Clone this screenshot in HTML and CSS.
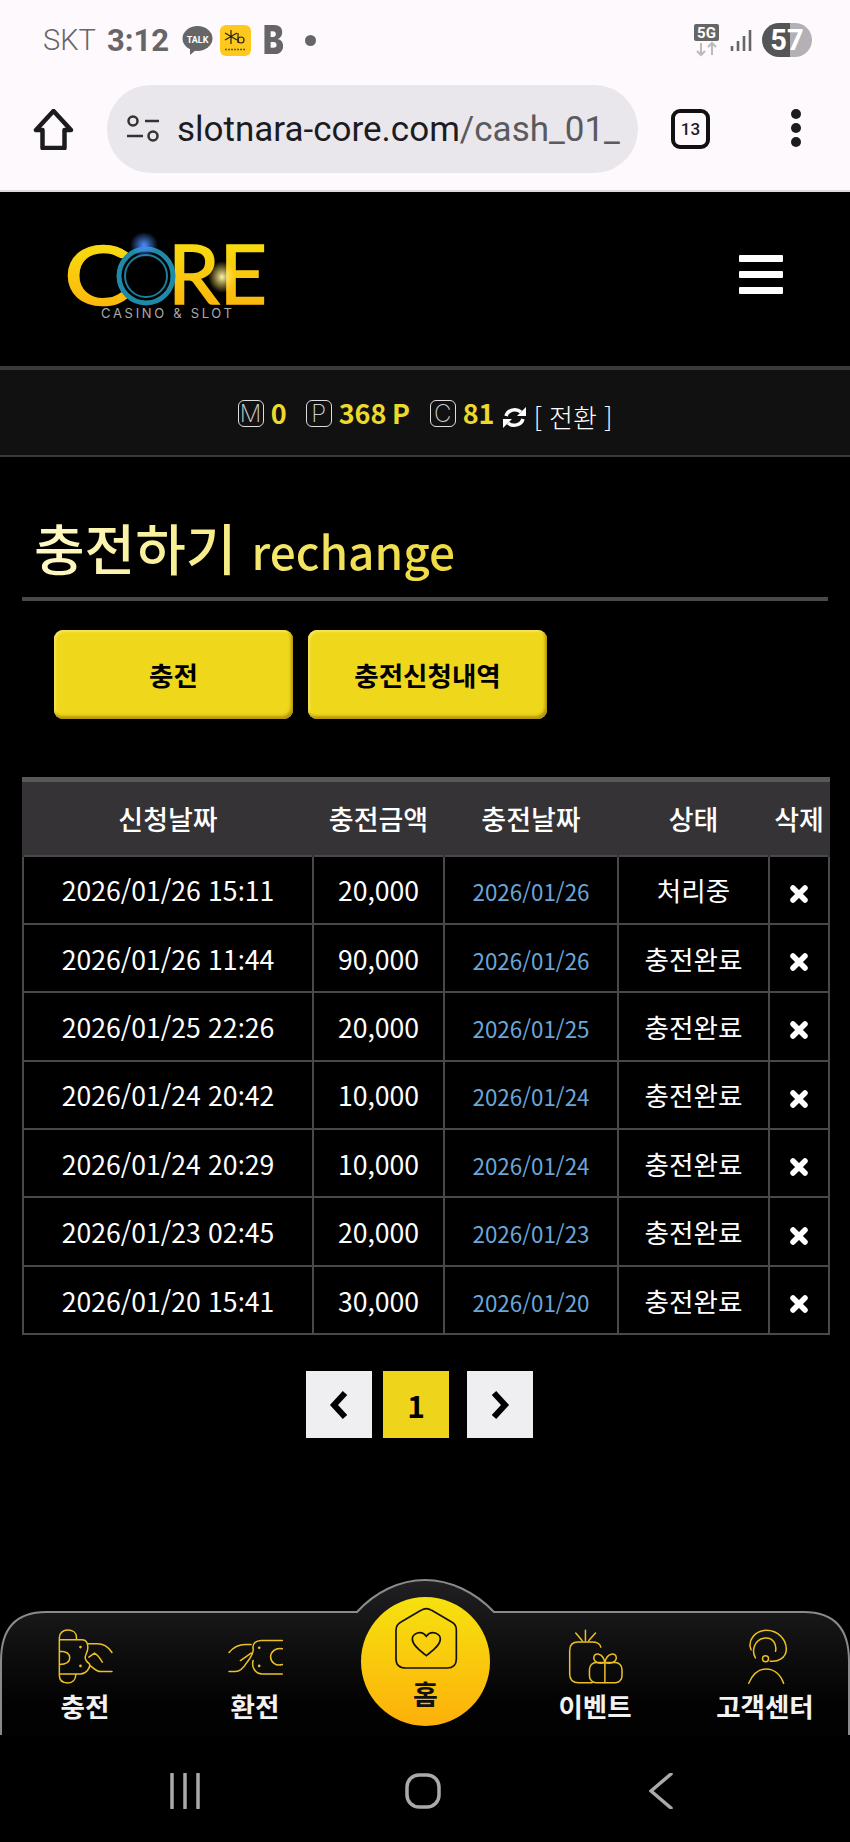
FILE: index.html
```html
<!DOCTYPE html>
<html lang="ko">
<head>
  <meta charset="UTF-8" />
  <title>충전하기 rechange</title>
  <link rel="stylesheet" href="styles.css">
</head>
<body>

  <div class="status">
    <span class="carrier">SKT</span>
    <span class="clock">3:12</span>
    <svg class="ico-talk" width="31" height="29" viewBox="0 0 31 29">
      <ellipse cx="15.5" cy="12.5" rx="15" ry="12.5" fill="#666"/>
      <polygon points="8,21 8,29 15,23" fill="#666"/>
      <text x="15.5" y="16.5" text-anchor="middle" class="talk-txt">TALK</text>
    </svg>
    <svg class="ico-kb" width="31" height="31" viewBox="0 0 31 31">
      <rect width="31" height="31" rx="6" fill="#fdc91c"/>
      <path d="M11 5v14M5 8l12 7M5 15l12-7" stroke="#222" stroke-width="1.2" fill="none"/>
      <path d="M18 8v10" stroke="#222" stroke-width="1.2"/>
      <circle cx="21" cy="15" r="3" stroke="#222" stroke-width="1.2" fill="none"/>
      <path d="M5 24.5h21" stroke="#6b5a10" stroke-width="1.6" stroke-dasharray="2 1"/>
    </svg>
    <span class="b-mark">B</span>
    <span class="dot"></span>
    <div class="status-right">
      <svg width="25" height="33" viewBox="0 0 25 33">
        <rect width="25" height="17" rx="2" fill="#666"/>
        <text x="12.5" y="14" text-anchor="middle" class="g5-txt">5G</text>
        <path d="M7 19v12M3 27l4 4 4-4M18 31V19M14 23l4-4 4 4" stroke="#bbb" stroke-width="2" fill="none"/>
      </svg>
      <svg class="ico-signal" width="22" height="23" viewBox="0 0 22 23">
        <path d="M2 17v5M8 12v10M14 7v15M20 1v21" stroke="#666" stroke-width="2.6"/>
      </svg>
      <span class="battery">57</span>
    </div>
  </div>

  <div class="chrome">
    <svg class="ico-home" width="41" height="41" viewBox="0 0 41 41">
      <path d="M20.5 2 3 21h6.500v18h22V21H38z" fill="none" stroke="#1c1b1f" stroke-width="4.500" stroke-linejoin="round"/>
    </svg>
    <div class="url">
      <svg class="tune" width="36" height="30" viewBox="0 0 36 30">
        <circle cx="8" cy="7" r="4.500" fill="none" stroke="#333" stroke-width="2.500"/>
        <path d="M20 7h14M2 22h16" stroke="#333" stroke-width="2.500"/>
        <circle cx="28" cy="22" r="4.500" fill="none" stroke="#333" stroke-width="2.500"/>
      </svg>
      <span class="url-txt"><b>slotnara-core.com</b>/cash_01_</span>
    </div>
    <span class="tabs">13</span>
    <span class="dots"><i></i><i></i><i></i></span>
  </div>

  <div class="site-top">
    <svg class="logo" width="210" height="100" viewBox="60 225 210 100">
      <defs>
        <linearGradient id="gold" x1="0" y1="0" x2="0" y2="1">
          <stop offset="0" stop-color="#f6e60f"/>
          <stop offset="1" stop-color="#fdae0c"/>
        </linearGradient>
        <radialGradient id="flare">
          <stop offset="0" stop-color="#4c8cff"/>
          <stop offset="1" stop-color="#4c8cff" stop-opacity="0"/>
        </radialGradient>
        <radialGradient id="flare2">
          <stop offset="0" stop-color="#fff6b0"/>
          <stop offset="1" stop-color="#ffe14a" stop-opacity="0"/>
        </radialGradient>
      </defs>
      <text x="64" y="305" class="logo-txt" fill="url(#gold)" stroke="url(#gold)" textLength="66" lengthAdjust="spacingAndGlyphs">C</text>
      <text x="168" y="304" class="logo-txt" fill="url(#gold)" stroke="url(#gold)" textLength="99" lengthAdjust="spacingAndGlyphs">RE</text>
      <circle cx="146" cy="276" r="27" fill="#000" stroke="#1e8aa8" stroke-width="5"/>
      <circle cx="146" cy="276" r="21" fill="#000" stroke="#1a7f9c" stroke-width="2"/>
      <ellipse cx="144" cy="245" rx="14" ry="13" fill="url(#flare)"/>
      <ellipse cx="222" cy="277" rx="14" ry="16" fill="url(#flare2)"/>
      <text x="101" y="318" class="logo-sub" textLength="131" lengthAdjust="spacing">CASINO &amp; SLOT</text>
    </svg>
    <div class="hamburger"><i></i><i></i><i></i></div>
  </div>

  <div class="money">
    <span class="mark">M</span><span class="amt amt-m">0</span>
    <span class="mark">P</span><span class="amt amt-p">368 P</span>
    <span class="mark">C</span><span class="amt amt-c">81</span>
    <svg class="sync" width="25" height="23" viewBox="0 0 25 23">
      <path d="M4 10a9 8 0 0 1 15-4" fill="none" stroke="#fff" stroke-width="3.500"/>
      <path d="M21 13a9 8 0 0 1-15 4" fill="none" stroke="#fff" stroke-width="3.500"/>
      <polygon points="24,1 24,10 15,10" fill="#fff"/>
      <polygon points="1,22 1,13 10,13" fill="#fff"/>
    </svg>
    <span class="swap">[ 전환 ]</span>
  </div>

  <h2 class="page-title"><span>충전하기</span><span class="en">rechange</span></h2>

  <div class="tab-btns">
    <a class="btn">충전</a>
    <a class="btn">충전신청내역</a>
  </div>

  <table class="list">
    <colgroup>
      <col class="c1"><col class="c2"><col class="c3"><col class="c4"><col class="c5">
    </colgroup>
    <thead>
      <tr><th>신청날짜</th><th>충전금액</th><th>충전날짜</th><th>상태</th><th>삭제</th></tr>
    </thead>
    <tbody>
      <tr><td>2026/01/26 15<span class="col">:</span>11</td><td>20,000</td><td class="day">2026/01/26</td><td>처리중</td><td><svg class="del" viewBox="0 0 18 18"><path d="M3 3l12 12M15 3 3 15"/></svg></td></tr>
      <tr><td>2026/01/26 11<span class="col">:</span>44</td><td>90,000</td><td class="day">2026/01/26</td><td>충전완료</td><td><svg class="del" viewBox="0 0 18 18"><path d="M3 3l12 12M15 3 3 15"/></svg></td></tr>
      <tr><td>2026/01/25 22<span class="col">:</span>26</td><td>20,000</td><td class="day">2026/01/25</td><td>충전완료</td><td><svg class="del" viewBox="0 0 18 18"><path d="M3 3l12 12M15 3 3 15"/></svg></td></tr>
      <tr><td>2026/01/24 20<span class="col">:</span>42</td><td>10,000</td><td class="day">2026/01/24</td><td>충전완료</td><td><svg class="del" viewBox="0 0 18 18"><path d="M3 3l12 12M15 3 3 15"/></svg></td></tr>
      <tr><td>2026/01/24 20<span class="col">:</span>29</td><td>10,000</td><td class="day">2026/01/24</td><td>충전완료</td><td><svg class="del" viewBox="0 0 18 18"><path d="M3 3l12 12M15 3 3 15"/></svg></td></tr>
      <tr><td>2026/01/23 02<span class="col">:</span>45</td><td>20,000</td><td class="day">2026/01/23</td><td>충전완료</td><td><svg class="del" viewBox="0 0 18 18"><path d="M3 3l12 12M15 3 3 15"/></svg></td></tr>
      <tr><td>2026/01/20 15<span class="col">:</span>41</td><td>30,000</td><td class="day">2026/01/20</td><td>충전완료</td><td><svg class="del" viewBox="0 0 18 18"><path d="M3 3l12 12M15 3 3 15"/></svg></td></tr>
    </tbody>
  </table>

  <div class="pager">
    <a class="pg"><svg width="20" height="30" viewBox="0 0 20 30"><path d="M16 3 5 15l11 12" fill="none" stroke="#000" stroke-width="6"/></svg></a>
    <a class="pg on">1</a>
    <a class="pg nxt"><svg width="20" height="30" viewBox="0 0 20 30"><path d="M4 3l11 12L4 27" fill="none" stroke="#000" stroke-width="6"/></svg></a>
  </div>

  <div class="bottom-nav">
    <svg class="nav-bg" width="850" height="156" viewBox="0 0 850 156">
      <defs>
        <linearGradient id="panel" x1="0" y1="0" x2="0" y2="1">
          <stop offset="0" stop-color="#201f21"/>
          <stop offset="0.8" stop-color="#020202"/>
        </linearGradient>
      </defs>
      <path d="M1 156V82Q1 33 46 33H357C375 13 400 1 425 1S475 13 494 33H804Q849 33 849 82V156" fill="url(#panel)" stroke="#8a8a8c" stroke-width="2"/>
    </svg>
    <a class="nav-item">
      <svg width="57" height="57" viewBox="170 203 170 170" class="nav-ico">
        <path d="M228 238V230C228 216 216 209 202 209 188 209 177 218 177 232V345C177 360 188 367 202 367 216 367 226 358 226 342M177 238H245C258 238 262 250 262 262 262 278 250 285 255 296 258 305 268 310 268 312 268 322 258 340 240 340H177M262 250H290C310 250 325 262 334 276M177 272C200 272 208 282 208 292 208 302 200 312 177 312M265 290 282 278C292 284 300 296 305 305M268 314C278 322 288 333 300 333H334"/>
        <circle cx="240" cy="260" r="4" class="fill"/><circle cx="240" cy="316" r="4" class="fill"/>
      </svg>
      <span>충전</span>
    </a>
    <a class="nav-item">
      <svg width="57" height="57" viewBox="680 203 170 170" class="nav-ico">
        <path d="M845 240H782C765 240 755 250 758 265 760 278 750 292 740 305 732 318 722 333 705 333H686M686 276C695 265 710 252 735 252H752M720 300 752 278M758 300C752 320 765 340 785 340H845M845 265C825 260 810 275 810 289 810 304 825 318 845 312"/>
        <circle cx="776" cy="262" r="4" class="fill"/><circle cx="776" cy="316" r="4" class="fill"/>
      </svg>
      <span>환전</span>
    </a>
    <a class="nav-center">
      <svg width="70" height="70" viewBox="150 100 210 210" class="home-ico">
        <path d="M240 122 180 157Q165 165 165 182V268Q165 295 195 295H318Q346 295 346 268V180Q346 165 332 157L272 122Q256 112 240 122Z"/>
        <path d="M256 258C240 245 214 228 214 208 214 193 240 178 256 200 272 178 298 193 298 208 298 228 272 245 256 258Z"/>
      </svg>
      <span>홈</span>
    </a>
    <a class="nav-item">
      <svg width="57" height="57" viewBox="425 203 170 170" class="nav-ico">
        <path d="M526 260Q522 245 500 245H458Q433 245 433 270V340Q433 366 460 366H500M480 240V210M451 218 470 240M510 218 490 240"/>
        <rect x="492" y="306" width="97" height="60" rx="20"/>
        <path d="M538 306V366M538 306C522 312 505 305 505 292 505 275 532 275 538 306 544 275 572 275 572 292 572 305 554 312 538 306Z"/>
      </svg>
      <span>이벤트</span>
    </a>
    <a class="nav-item">
      <svg width="57" height="57" viewBox="933 203 170 170" class="nav-ico">
        <path d="M975 268C963 240 988 210 1020 210 1056 210 1081 238 1080 268 1079 292 1055 305 1032 302M988 292C975 270 985 235 1018 233 1040 232 1052 250 1048 272"/>
        <circle cx="1018" cy="295" r="9"/>
        <path d="M968 368C980 340 1000 325 1020 325 1042 325 1062 340 1072 368"/>
      </svg>
      <span>고객센터</span>
    </a>
  </div>

  <div class="sys-nav">
    <svg width="32" height="36" viewBox="0 0 32 36"><path d="M3 1v34M16 1v34M29 1v34"/></svg>
    <svg width="36" height="36" viewBox="0 0 36 36"><rect x="2" y="2" width="32" height="32" rx="12"/></svg>
    <svg width="24" height="36" viewBox="0 0 24 36"><path d="M22 1 2 18l20 17"/></svg>
  </div>

</body>
</html>
```

FILE: styles.css
```css
* {
  box-sizing: border-box;
}

html, body {
  margin: 0;
  padding: 0;
}

body {
  width: 850px;
  height: 1842px;
  overflow: hidden;
  display: flex;
  flex-direction: column;
  background: #000;
  color: #fff;
  font-family: "Noto Sans CJK KR", "Noto Sans", sans-serif;
}

/* phone status bar */
.status {
  height: 70px;
  flex: none;
  display: flex;
  align-items: center;
  padding: 10px 38px 0 43px;
  background: #fdf9fd;
  color: #666;
  font-family: Roboto, sans-serif;
}

.carrier {
  font-size: 29px;
  font-weight: 300;
  width: 64px;
}

.clock {
  font-size: 31px;
  font-weight: 700;
  width: 75px;
}

.ico-talk {
  margin-right: 7px;
}

.talk-txt {
  font: 700 9px Roboto, sans-serif;
  fill: #fff;
}

.b-mark {
  margin-left: 12px;
  width: 22px;
  font: 900 40px/1 Inter, sans-serif;
  color: #666;
  transform: scaleX(0.78);
  transform-origin: left center;
}

.dot {
  width: 11px;
  height: 11px;
  margin-left: 20px;
  border-radius: 50%;
  background: #666;
}

.status-right {
  margin-left: auto;
  display: flex;
  align-items: center;
}

.g5-txt {
  font: 700 15px Roboto, sans-serif;
  fill: #fff;
}

.ico-signal {
  margin: 0 10px 0 11px;
}

.battery {
  width: 50px;
  height: 34px;
  border-radius: 17px;
  background: linear-gradient(90deg, #555 56%, #b5b0b5 56%);
  color: #fff;
  font: 700 29px/34px Roboto, sans-serif;
  text-align: center;
}

/* browser bar */
.chrome {
  height: 122px;
  flex: none;
  display: flex;
  align-items: flex-start;
  padding: 15px 0 0 33px;
  background: #fdf9fd;
  border-bottom: 2px solid #dcdadd;
  color: #1c1b1f;
  font-family: Roboto, sans-serif;
}

.ico-home {
  margin-top: 24px;
}

.url {
  width: 531px;
  height: 88px;
  margin-left: 33px;
  padding-left: 18px;
  display: flex;
  align-items: center;
  gap: 16px;
  border-radius: 44px;
  background: #e9e7ec;
  overflow: hidden;
}

.tune {
  flex: none;
}

.url-txt {
  font-size: 35px;
  white-space: nowrap;
  color: #5a5a5e;
}

.url-txt b {
  font-weight: 400;
  color: #1c1b1f;
}

.tabs {
  width: 39px;
  height: 40px;
  margin: 24px 0 0 33px;
  border: 4px solid #111;
  border-radius: 9px;
  font-size: 17px;
  font-weight: 500;
  line-height: 32px;
  text-align: center;
}

.dots {
  display: flex;
  flex-direction: column;
  gap: 4px;
  margin: 24px 0 0 81px;
}

.dots i {
  width: 10px;
  height: 10px;
  border-radius: 50%;
  background: #1c1b1f;
}

/* site header */
.site-top {
  height: 174px;
  flex: none;
  display: flex;
  justify-content: space-between;
  padding: 33px 67px 0 60px;
}

.logo-txt {
  font: 400 81px Lato, sans-serif;
  stroke-width: 1.6px;
}

.logo-sub {
  font: 400 13px Inter, sans-serif;
  fill: #aaa;
}

.hamburger {
  display: flex;
  flex-direction: column;
  gap: 9px;
  margin-top: 30px;
}

.hamburger i {
  width: 44px;
  height: 7px;
  border-radius: 1px;
  background: #fff;
}

.money {
  height: 91px;
  flex: none;
  display: flex;
  align-items: center;
  justify-content: center;
  border-top: 4px solid #3a393b;
  border-bottom: 2px solid #3a393b;
  background: #121112;
}

.mark {
  width: 26px;
  height: 27px;
  margin-top: 1px;
  border: 1px solid #ddd;
  border-radius: 6px;
  color: #ccc;
  font: 200 24px/25px Inter, sans-serif;
  text-align: center;
}

.amt {
  margin: 0 0 0 7px;
  color: #edd92c;
  font-size: 27px;
  font-weight: 700;
  white-space: nowrap;
}

.amt-m {
  width: 35px;
}

.amt-p {
  width: 91px;
  margin-left: 7px;
  word-spacing: -2px;
}

.amt-c {
  width: 31px;
  margin-left: 7px;
}

.sync {
  margin: 10px 0 0 8px;
}

.swap {
  margin: 8px 0 0 7px;
  font-size: 26px;
  font-weight: 300;
  white-space: nowrap;
}

/* page title */
.page-title {
  height: 144px;
  flex: none;
  margin: 0 22px;
  padding: 50px 0 0 12px;
  border-bottom: 4px solid #49484a;
  font-size: 55px;
  font-weight: 500;
  line-height: 78px;
  white-space: nowrap;
}

.page-title span {
  background: linear-gradient(90deg, #fff8c8 0%, #f7eb80 100%);
  -webkit-background-clip: text;
  background-clip: text;
  color: transparent;
}

.page-title .en {
  margin-left: 15px;
  font-size: 46px;
  background-image: linear-gradient(90deg, #f5e870 0%, #eed93f 100%);
}

.tab-btns {
  display: flex;
  flex: none;
  gap: 15px;
  margin: 29px 0 0 54px;
}

.btn {
  width: 239px;
  height: 89px;
  border-radius: 9px;
  background: #efd71b;
  box-shadow: inset -2px -3px 3px #b3960f, inset 2px 2px 2px #f6e458;
  color: #000;
  font-size: 26.5px;
  font-weight: 700;
  line-height: 89px;
  text-align: center;
}

/* history table */
.list {
  flex: none;
  width: 806px;
  margin: 58px 0 0 22px;
  table-layout: fixed;
  border-collapse: collapse;
}

.c1 { width: 290px; }
.c2 { width: 131px; }
.c3 { width: 174px; }
.c4 { width: 151px; }
.c5 { width: 60px; }

.list th {
  height: 76px;
  padding: 0;
  border-top: 5px solid #58575a;
  border-left: 2px solid #353336;
  border-right: 2px solid #353336;
  background: #353336;
  font-size: 27px;
  font-weight: 500;
}

.list td {
  height: 68.4px;
  padding: 0;
  border: 2px solid #49484a;
  font-size: 26.6px;
  font-weight: 400;
  text-align: center;
}

.list td.day {
  color: #6ba6d8;
  font-size: 22.4px;
  padding-top: 3px;
}

/* the CJK font sets the colon too high between digits */
.col {
  font-family: "Noto Sans", sans-serif;
}

.del {
  display: block;
  width: 18px;
  height: 18px;
  margin: 8px auto 0;
  fill: none;
  stroke: #fff;
  stroke-width: 5.500;
  stroke-linecap: round;
}

.pager {
  flex: none;
  display: flex;
  justify-content: center;
  gap: 11px;
  margin-top: 36px;
  padding-right: 11px;
}

.pg {
  width: 66px;
  height: 67px;
  display: flex;
  align-items: center;
  justify-content: center;
  background: #efeef1;
  color: #000;
  font-size: 30px;
  font-weight: 700;
}

.pg.on {
  background: #eed41b;
}

.pg.nxt {
  margin-left: 7px;
}

/* bottom menu */
.bottom-nav {
  position: relative;
  margin-top: auto;
  height: 156px;
  flex: none;
  display: grid;
  grid-template-columns: repeat(5, 170px);
}

.nav-bg {
  position: absolute;
  left: 0;
  top: 0;
}

.nav-item {
  position: relative;
  display: flex;
  flex-direction: column;
  align-items: center;
  padding-top: 49px;
  font-size: 26.5px;
  font-weight: 700;
  line-height: 30px;
  color: #f2f2f2;
}

.nav-item span {
  margin-top: 6px;
  white-space: nowrap;
}

.nav-ico {
  display: block;
  fill: none;
  stroke: #ecc024;
  stroke-width: 4.500;
  stroke-linecap: round;
}

.nav-ico .fill {
  fill: #ecc024;
  stroke: none;
}

.nav-center {
  position: relative;
  width: 129px;
  height: 129px;
  margin: 18px 0 0 21px;
  padding-top: 6px;
  display: flex;
  flex-direction: column;
  align-items: center;
  border-radius: 50%;
  background: linear-gradient(180deg, #f6e20f, #fdb00a);
  color: #111;
  font-size: 27px;
  font-weight: 700;
  line-height: 28px;
}

.nav-center span {
  margin-top: 7px;
}

.home-ico {
  display: block;
  fill: none;
  stroke: #111;
  stroke-width: 5;
}

/* android buttons */
.sys-nav {
  height: 107px;
  flex: none;
  display: grid;
  grid-template-columns: repeat(3, 238px);
  justify-items: center;
  padding: 38px 0 0 66px;
}

.sys-nav svg {
  fill: none;
  stroke: #aaa;
  stroke-width: 3.500;
  stroke-linecap: round;
}
```
